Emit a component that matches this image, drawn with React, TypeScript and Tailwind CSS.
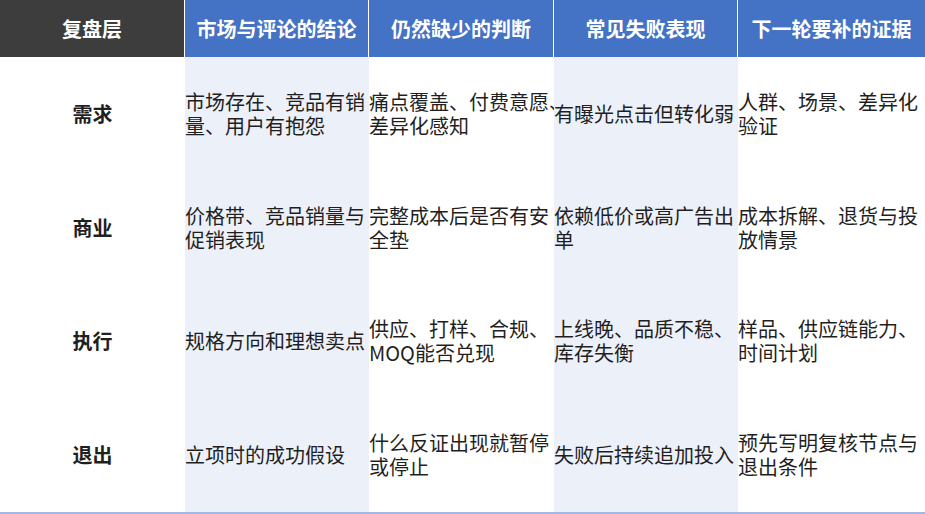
import React from "react";

const headers = ["复盘层", "市场与评论的结论", "仍然缺少的判断", "常见失败表现", "下一轮要补的证据"];

const rows: { label: string; cells: string[][] }[] = [
  {
    label: "需求",
    cells: [
      ["市场存在、竞品有销", "量、用户有抱怨"],
      ["痛点覆盖、付费意愿、", "差异化感知"],
      ["有曝光点击但转化弱"],
      ["人群、场景、差异化", "验证"],
    ],
  },
  {
    label: "商业",
    cells: [
      ["价格带、竞品销量与", "促销表现"],
      ["完整成本后是否有安", "全垫"],
      ["依赖低价或高广告出", "单"],
      ["成本拆解、退货与投", "放情景"],
    ],
  },
  {
    label: "执行",
    cells: [
      ["规格方向和理想卖点"],
      ["供应、打样、合规、", "MOQ能否兑现"],
      ["上线晚、品质不稳、", "库存失衡"],
      ["样品、供应链能力、", "时间计划"],
    ],
  },
  {
    label: "退出",
    cells: [
      ["立项时的成功假设"],
      ["什么反证出现就暂停", "或停止"],
      ["失败后持续追加投入"],
      ["预先写明复核节点与", "退出条件"],
    ],
  },
];

export default function App() {
  return (
    <div
      className="w-[925px] h-[514px] bg-white text-[#1f1f1f] overflow-hidden"
      style={{ fontFamily: '"Noto Sans CJK SC", "Noto Sans", sans-serif' }}
    >
      <div className="grid grid-cols-[185px_184px_185px_184px_1fr] grid-rows-[57px_repeat(4,1fr)] h-[514px] border-b-2 border-[#a3b7e5]">
        {headers.map((h, i) => (
          <div
            key={h}
            className={
              "flex items-center justify-center text-[20px] font-semibold text-white " +
              (i === 0 ? "bg-[#3d3d3d] border-r border-white" : i < 4 ? "bg-[#4472c4] border-r border-white" : "bg-[#4472c4]")
            }
          >
            {h}
          </div>
        ))}
        {rows.map((r) => (
          <React.Fragment key={r.label}>
            <div className="flex items-center justify-center text-[20px] font-bold">{r.label}</div>
            {r.cells.map((lines, j) => (
              <div
                key={j}
                className={
                  "flex flex-col justify-center text-[20px] leading-[24px] " +
                  (j === 0 || j === 2 ? "bg-[#ecf0f9]" : "")
                }
              >
                {lines.map((l) => (
                  <span key={l} className="whitespace-nowrap">
                    {l}
                  </span>
                ))}
              </div>
            ))}
          </React.Fragment>
        ))}
      </div>
    </div>
  );
}
